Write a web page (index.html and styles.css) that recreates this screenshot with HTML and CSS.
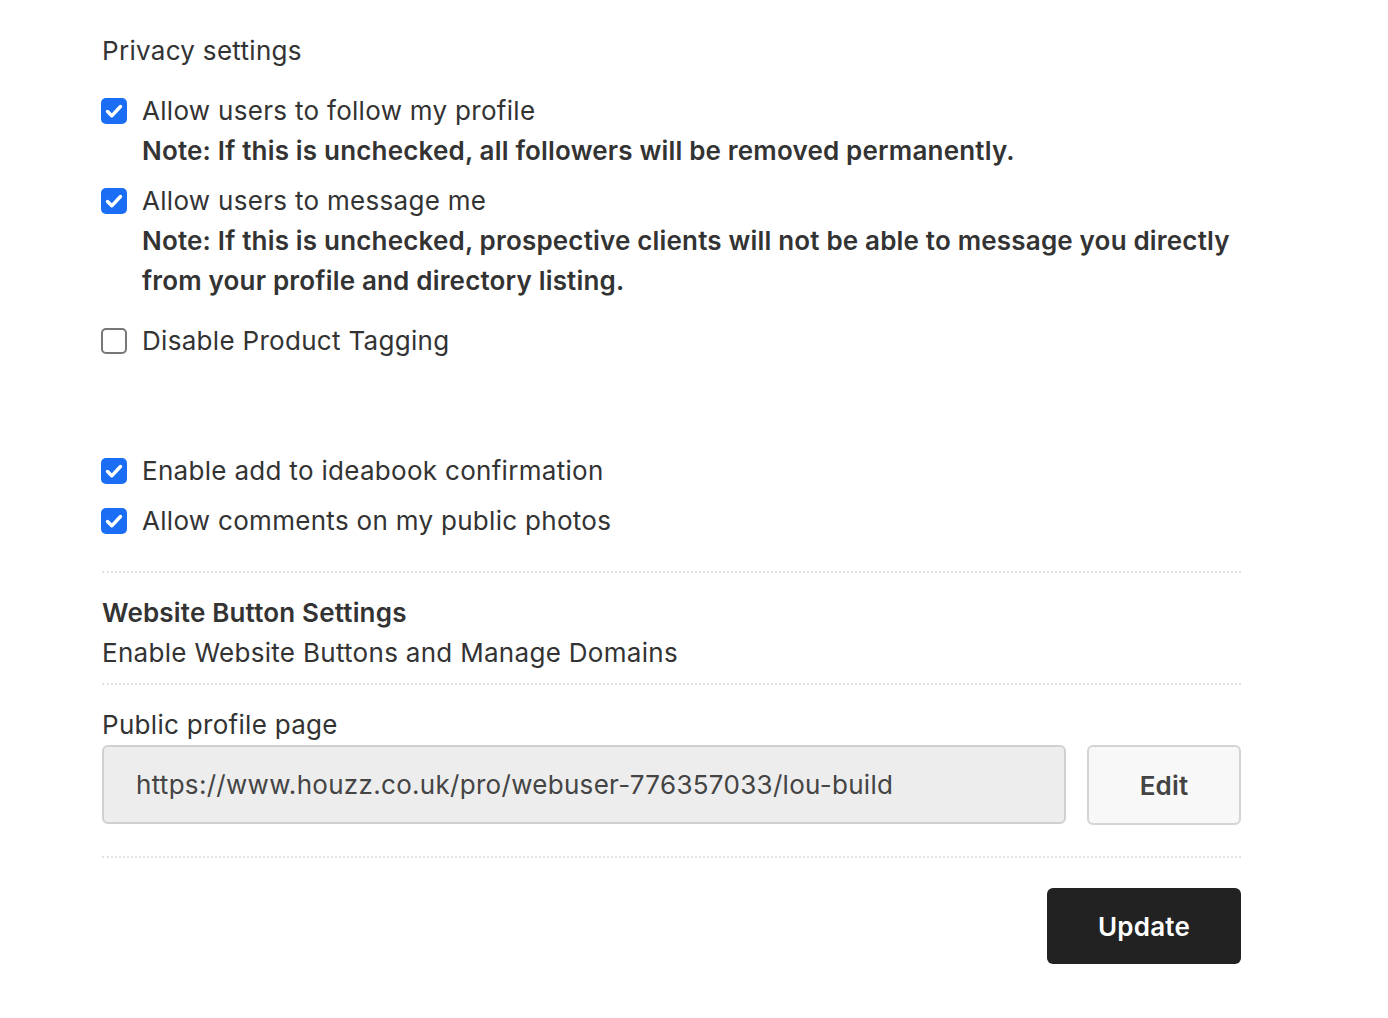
FILE: index.html
```html
<!DOCTYPE html>
<html lang="en">
<head>
<meta charset="utf-8">
<title>Settings</title>
<link rel="stylesheet" href="styles.css">
</head>
<body>
<form class="settings">
  <h2 class="section-title">Privacy settings</h2>

  <label class="check-row">
    <span class="box checked"><svg viewBox="0 0 26 26"><path d="M6.5 13.5l4.3 4.3 8.7-9.3" /></svg></span>
    <span class="check-text">Allow users to follow my profile
      <span class="note">Note: If this is unchecked, all followers will be removed permanently.</span>
    </span>
  </label>

  <label class="check-row">
    <span class="box checked"><svg viewBox="0 0 26 26"><path d="M6.5 13.5l4.3 4.3 8.7-9.3" /></svg></span>
    <span class="check-text">Allow users to message me
      <span class="note">Note: If this is unchecked, prospective clients will not be able to message you directly from your profile and directory listing.</span>
    </span>
  </label>

  <label class="check-row spaced">
    <span class="box"></span>
    <span class="check-text">Disable Product Tagging</span>
  </label>

  <div class="group">
    <label class="check-row">
      <span class="box checked"><svg viewBox="0 0 26 26"><path d="M6.5 13.5l4.3 4.3 8.7-9.3" /></svg></span>
      <span class="check-text">Enable add to ideabook confirmation</span>
    </label>
    <label class="check-row">
      <span class="box checked"><svg viewBox="0 0 26 26"><path d="M6.5 13.5l4.3 4.3 8.7-9.3" /></svg></span>
      <span class="check-text">Allow comments on my public photos</span>
    </label>
  </div>

  <div class="block">
    <div class="block-title">Website Button Settings</div>
    <div class="block-sub">Enable Website Buttons and Manage Domains</div>
  </div>

  <div class="block profile">
    <div class="field-label">Public profile page</div>
    <div class="url-row">
      <div class="url-field">https://www.houzz.co.uk/pro/webuser-776357033/lou-build</div>
      <button type="button" class="btn-edit">Edit</button>
    </div>
  </div>

  <div class="actions">
    <button type="button" class="btn-update">Update</button>
  </div>
</form>
</body>
</html>
```

FILE: styles.css
```css
* { box-sizing: border-box; }

body {
  margin: 0;
  background: #fff;
  color: #333;
  font-family: "Inter", "Liberation Sans", sans-serif;
  font-size: 26px;
  letter-spacing: 0.3px;
}

.settings {
  width: 1139px;
  margin-left: 102px;
  padding-top: 31px;
}

.section-title {
  margin: 0 0 20px;
  font-size: 26px;
  font-weight: 400;
  line-height: 40px;
}

.check-row {
  display: flex;
  align-items: flex-start;
  margin-left: -1px;
  margin-bottom: 10px;
  line-height: 40px;
}

.check-row.spaced { margin-top: 20px; }

.box {
  flex: none;
  width: 26px;
  height: 26px;
  margin-top: 7px;
  margin-right: 15px;
  border: 2px solid #777;
  border-radius: 5px;
  background: #fff;
}

.box.checked {
  border: none;
  background: #1b6ef3;
}

.box svg {
  display: block;
  width: 26px;
  height: 26px;
  fill: none;
  stroke: #fff;
  stroke-width: 3.4;
  stroke-linecap: round;
  stroke-linejoin: round;
}

.check-text { display: block; }

.note {
  display: block;
  font-weight: 600;
  letter-spacing: 0.18px;
}

.group {
  margin-top: 90px;
  padding-bottom: 20px;
  border-bottom: 2px dotted #e2e2e2;
}

.block {
  padding: 20px 0 10px;
  border-bottom: 2px dotted #e2e2e2;
  line-height: 40px;
}

.block-title {
  font-weight: 600;
  letter-spacing: 0.18px;
}

.profile { padding: 20px 0 31px; }

.url-row {
  display: flex;
  gap: 21px;
}

.url-field {
  flex: 1;
  height: 79px;
  padding: 0 32px;
  display: flex;
  align-items: center;
  background: #ededed;
  border: 2px solid #d0d0d0;
  border-radius: 6px;
  color: #444;
}

.btn-edit {
  width: 154px;
  height: 80px;
  background: #f8f8f8;
  border: 2px solid #d4d4d4;
  border-radius: 6px;
  font: 600 26px "Inter", "Liberation Sans", sans-serif;
  letter-spacing: 0.18px;
  color: #444;
}

.actions {
  display: flex;
  justify-content: flex-end;
  padding-top: 30px;
}

.btn-update {
  width: 194px;
  height: 76px;
  background: #222;
  color: #fff;
  border: none;
  border-radius: 6px;
  font: 600 26px "Inter", "Liberation Sans", sans-serif;
  letter-spacing: 0.18px;
}
```
